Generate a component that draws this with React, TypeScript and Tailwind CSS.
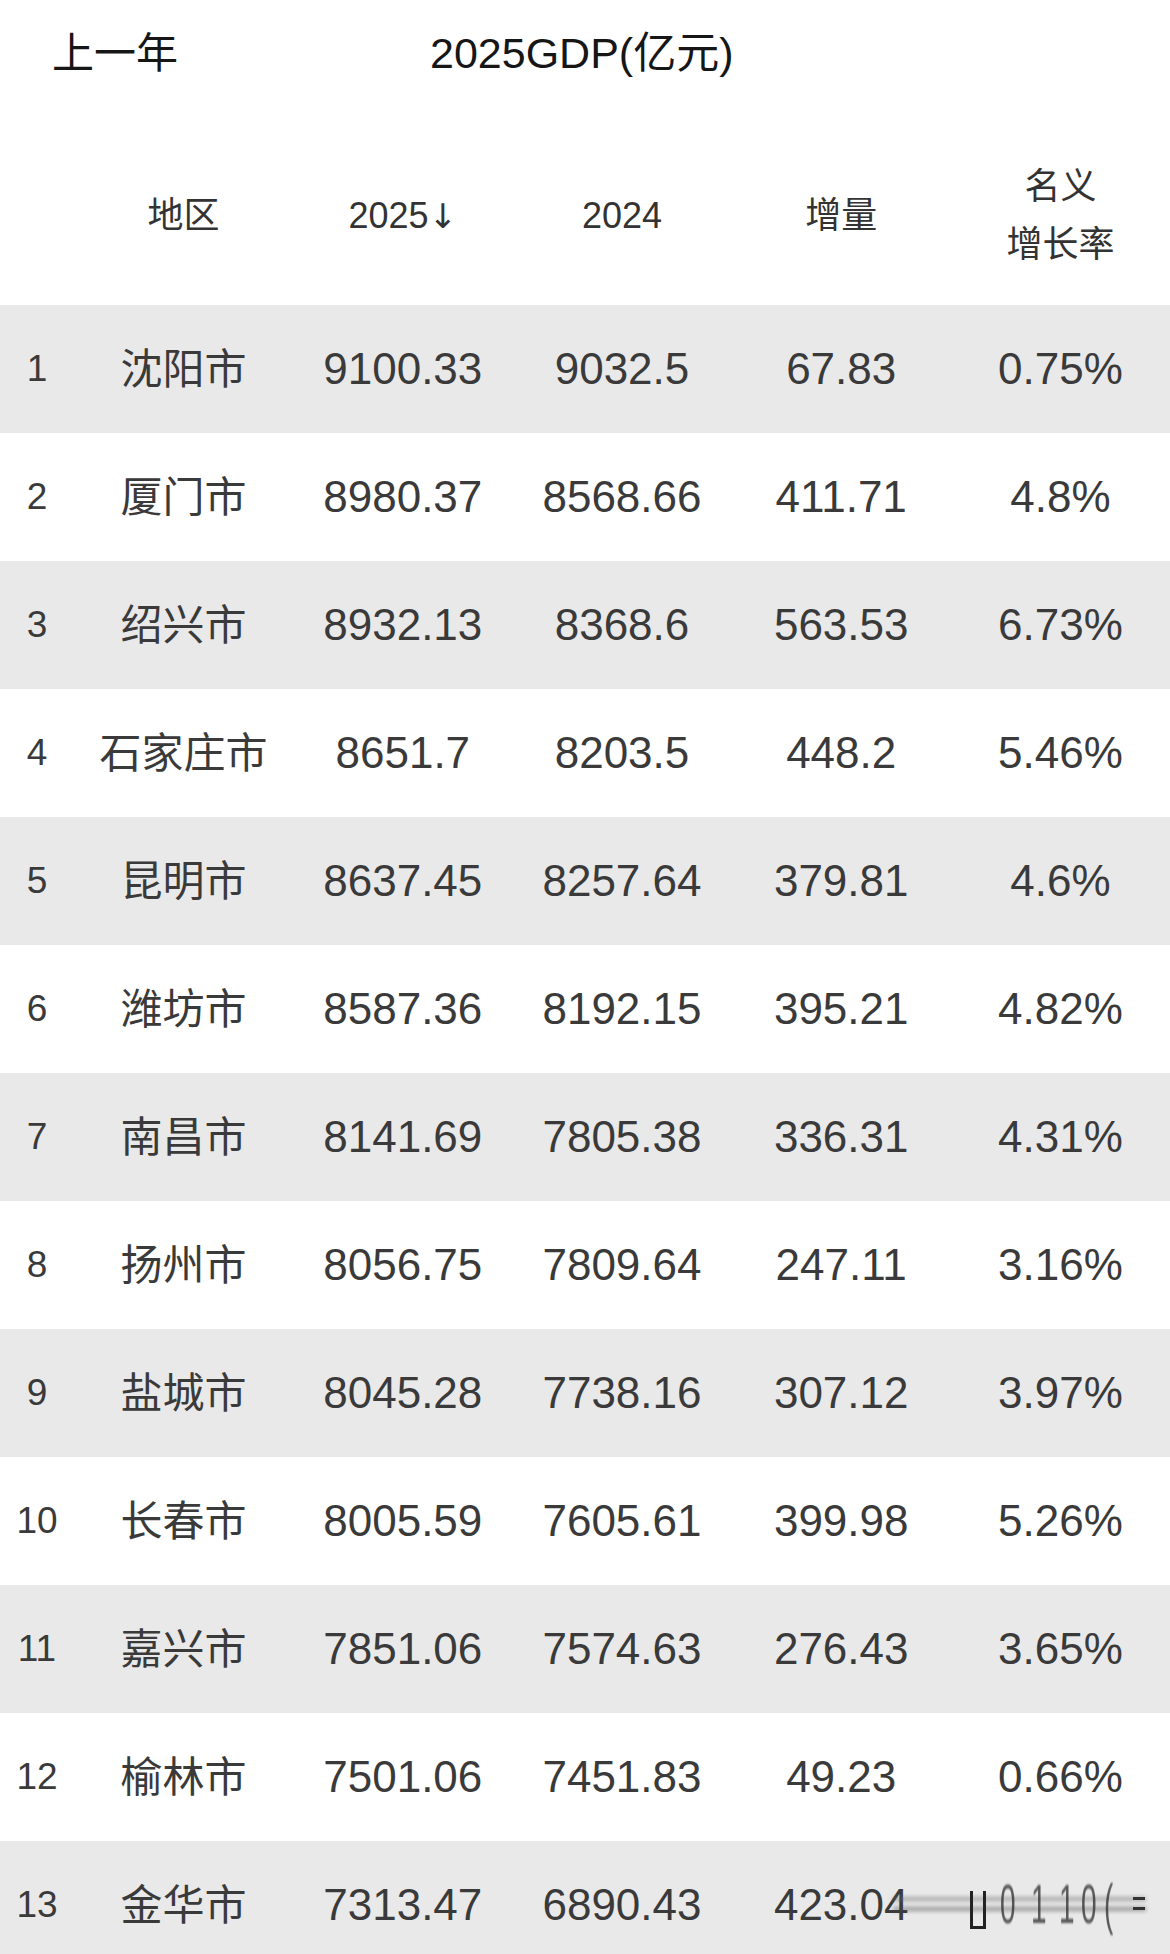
import React from "react";

type Row = { rank: number; city: string; y2025: string; y2024: string; inc: string; rate: string };

const rows: Row[] = [
  { rank: 1, city: "沈阳市", y2025: "9100.33", y2024: "9032.5", inc: "67.83", rate: "0.75%" },
  { rank: 2, city: "厦门市", y2025: "8980.37", y2024: "8568.66", inc: "411.71", rate: "4.8%" },
  { rank: 3, city: "绍兴市", y2025: "8932.13", y2024: "8368.6", inc: "563.53", rate: "6.73%" },
  { rank: 4, city: "石家庄市", y2025: "8651.7", y2024: "8203.5", inc: "448.2", rate: "5.46%" },
  { rank: 5, city: "昆明市", y2025: "8637.45", y2024: "8257.64", inc: "379.81", rate: "4.6%" },
  { rank: 6, city: "潍坊市", y2025: "8587.36", y2024: "8192.15", inc: "395.21", rate: "4.82%" },
  { rank: 7, city: "南昌市", y2025: "8141.69", y2024: "7805.38", inc: "336.31", rate: "4.31%" },
  { rank: 8, city: "扬州市", y2025: "8056.75", y2024: "7809.64", inc: "247.11", rate: "3.16%" },
  { rank: 9, city: "盐城市", y2025: "8045.28", y2024: "7738.16", inc: "307.12", rate: "3.97%" },
  { rank: 10, city: "长春市", y2025: "8005.59", y2024: "7605.61", inc: "399.98", rate: "5.26%" },
  { rank: 11, city: "嘉兴市", y2025: "7851.06", y2024: "7574.63", inc: "276.43", rate: "3.65%" },
  { rank: 12, city: "榆林市", y2025: "7501.06", y2024: "7451.83", inc: "49.23", rate: "0.66%" },
  { rank: 13, city: "金华市", y2025: "7313.47", y2024: "6890.43", inc: "423.04", rate: "" },
];

const font = "font-['Liberation_Sans','Noto_Sans_CJK_SC',sans-serif]";
const grid = "grid grid-cols-[74px_repeat(5,minmax(0,1fr))] items-center";

// 截图右下角的水印，盖住了最后一格
function Watermark() {
  const glyphs: [string, string][] = [
    ["0", "left-[107px]"],
    ["1", "left-[138px]"],
    ["1", "left-[166px]"],
    ["0", "left-[188px]"],
    ["(", "left-[211px]"],
  ];
  return (
    <div className="absolute left-[893px] top-[44px] h-[48px] w-[265px]">
      <div className="absolute left-0 right-[12px] top-[12px] h-[4px] bg-[#666] opacity-50 blur-[2px]" />
      <div className="absolute left-0 right-[12px] top-[22px] h-[4px] bg-[#444] opacity-50 blur-[2px]" />
      <div className="absolute left-[77px] top-[6px] h-[38px] w-[16px] border-x-[3px] border-b-[3px] border-[#222] blur-[0.6px]" />
      {glyphs.map(([g, pos], i) => (
        <span
          key={i}
          className={`absolute top-[-9px] ${pos} origin-left scale-x-[0.5] text-[56px] leading-none text-[#2a2a2a] opacity-75 blur-[1.2px]`}
        >
          {g}
        </span>
      ))}
      <div className="absolute left-[240px] top-[12px] h-[3px] w-[12px] bg-[#333] blur-[0.5px]" />
      <div className="absolute left-[240px] top-[22px] h-[3px] w-[12px] bg-[#333] blur-[0.5px]" />
    </div>
  );
}

export default function App() {
  return (
    <div className={`h-[1954px] w-[1170px] overflow-hidden bg-white ${font}`}>
      <div className="relative h-[106px] text-[42px] leading-none text-[#161616]">
        <span className="absolute left-[52px] top-[33px]">上一年</span>
        <span className="absolute left-[430px] top-[32px] text-[43px]">2025GDP(亿元)</span>
      </div>

      <div className={`${grid} h-[199px] pt-[21px] text-center text-[36px] leading-[58px] text-[#333]`}>
        <div />
        <div>地区</div>
        <div>
          2025<span className="font-['DejaVu_Sans'] text-[34px]">↓</span>
        </div>
        <div>2024</div>
        <div>增量</div>
        <div>
          名义
          <br />
          增长率
        </div>
      </div>

      {rows.map((r, i) => (
        <div
          key={r.rank}
          className={`${grid} relative h-[128px] text-center text-[#3a3a3a] ${i % 2 === 0 ? "bg-[#e9e9e9]" : "bg-white"}`}
        >
          <div className="text-[37px]">{r.rank}</div>
          <div className="text-[42px]">{r.city}</div>
          <div className="text-[44px]">{r.y2025}</div>
          <div className="text-[44px]">{r.y2024}</div>
          <div className="text-[44px]">{r.inc}</div>
          <div className="text-[44px]">{r.rate}</div>
          {!r.rate && <Watermark />}
        </div>
      ))}
    </div>
  );
}
